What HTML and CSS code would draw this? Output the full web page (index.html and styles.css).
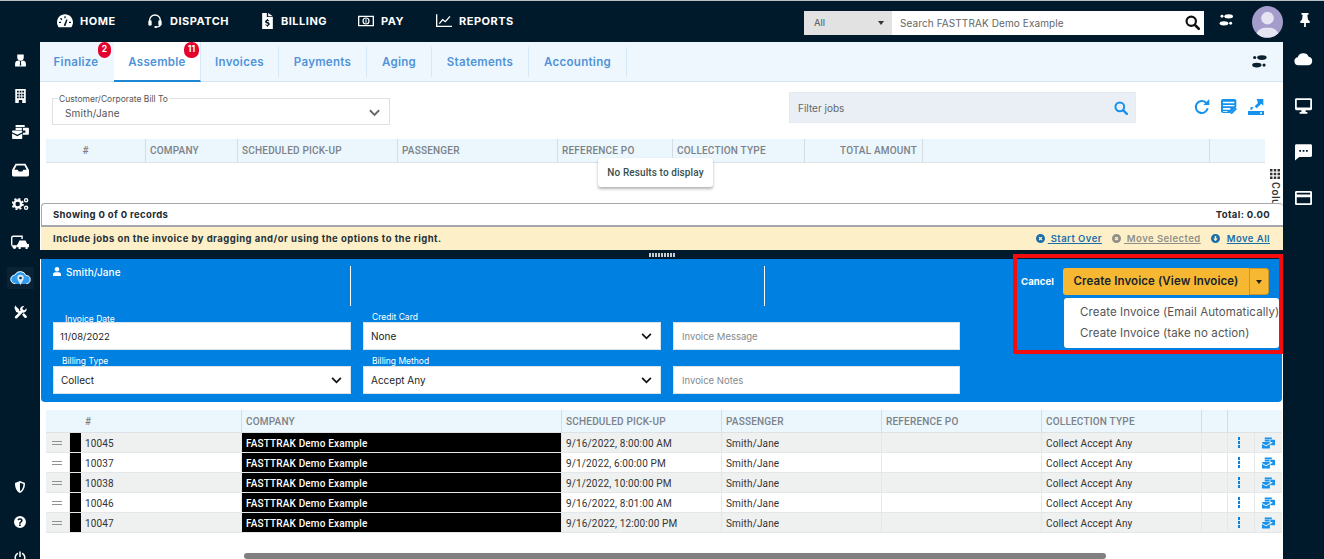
FILE: index.html
```html
<!DOCTYPE html>
<html lang="en">
<head>
<meta charset="utf-8">
<title>FASTTRAK Billing</title>
<link rel="stylesheet" href="styles.css">
</head>
<body>
<svg class="defs" width="0" height="0" aria-hidden="true">
  <symbol id="i-gauge" viewBox="0 0 24 24"><path fill="currentColor" fill-rule="evenodd" d="M12 2C5.400 2 0 7.400 0 14c0 2.700.9 5.200 2.400 7.200h19.200C23.100 19.200 24 16.700 24 14 24 7.400 18.600 2 12 2zM11 5h2v3h-2zM4.500 8.500l1.500-1.500 2.200 2.200-1.500 1.500zM3 13h3v2H3zM18 13h3v2h-3zM10.200 18.500l3.800-9 1.800.8-3 8.700a2 2 0 0 1-2.600-.5z"/></symbol>
  <symbol id="i-headset" viewBox="0 0 24 24"><path fill="none" stroke="currentColor" stroke-width="2" d="M4 13V11a8 8 0 0 1 16 0v2M20 17c0 3-3 4-6 4"/><rect x="2" y="11" width="5" height="8" rx="2" fill="currentColor"/><rect x="17" y="11" width="5" height="8" rx="2" fill="currentColor"/><rect x="11" y="19.500" width="4" height="3" rx="1.500" fill="currentColor"/></symbol>
  <symbol id="i-bill" viewBox="0 0 16 24"><path fill="currentColor" fill-rule="evenodd" d="M0 0h7v6H16v18H0zM9 0l7 5H9zM7.200 9v1.300C5.500 10.600 4.500 11.600 4.500 13c0 1.600 1.300 2.200 2.900 2.700 1 .3 1.400.6 1.400 1 0 .5-.5.800-1.200.800-.7 0-1.500-.3-2.100-.8l-.9 1.300c.7.600 1.600 1 2.600 1.100V20.500h1.500v-1.400c1.600-.3 2.600-1.300 2.600-2.700 0-1.700-1.300-2.300-2.900-2.800-1-.3-1.400-.5-1.400-.9s.4-.7 1.100-.7c.6 0 1.200.2 1.700.6l.9-1.200c-.6-.5-1.300-.8-2-.9V9z"/></symbol>
  <symbol id="i-money" viewBox="0 0 24 18"><path fill="none" stroke="currentColor" stroke-width="2" d="M1 2h22v14H1z"/><circle cx="12" cy="9" r="4.500" fill="none" stroke="currentColor" stroke-width="1.800"/><path stroke="currentColor" stroke-width="1.600" d="M12 6.500v5"/></symbol>
  <symbol id="i-chart" viewBox="0 0 24 20"><path fill="none" stroke="currentColor" stroke-width="2" d="M1 0v18h23M5 14l5-6 4 3 7-8"/></symbol>
  <symbol id="i-steps" viewBox="0 0 24 18"><ellipse cx="16" cy="3.500" rx="6.500" ry="3.300"/><circle cx="6" cy="3.500" r="2.200"/><ellipse cx="9" cy="14" rx="6.500" ry="3.300"/><circle cx="19" cy="14" r="2.200"/></symbol>
  <symbol id="i-pin" viewBox="0 0 24 24"><path fill="currentColor" d="M6 0h12v3h-2l1 8 3 3v3h-6.500v7h-3v-7H4v-3l3-3 1-8H6z"/></symbol>
  <symbol id="i-search" viewBox="0 0 24 24"><circle cx="10" cy="10" r="7.500" fill="none" stroke="currentColor" stroke-width="3.500"/><path stroke="currentColor" stroke-width="4" stroke-linecap="round" d="M16 16l6 6"/></symbol>
  <symbol id="i-user-tie" viewBox="0 0 24 24"><path fill="currentColor" d="M6 2h12v5a6 6 0 0 1-12 0z"/><path fill="currentColor" fill-rule="evenodd" d="M2 24v-5c0-4 3-6 6-6h8c3 0 6 2 6 6v5zM10.500 14l.8 2-.8 6h3l-.8-6 .8-2z"/></symbol>
  <symbol id="i-building" viewBox="0 0 20 24"><path fill="currentColor" fill-rule="evenodd" d="M1 0h18v24h-6v-5H7v5H1zM4 3v3h3V3zM8.500 3v3h3V3zM13 3v3h3V3zM4 8v3h3V8zM8.500 8v3h3V8zM13 8v3h3V8zM4 13v3h3v-3zM8.500 13v3h3v-3zM13 13v3h3v-3z"/></symbol>
  <symbol id="i-stack" viewBox="0 0 24 20"><path fill="currentColor" d="M5 0h13v3H5zM5 4h9v3H5zM15.500 4H23c.6 0 1 .4 1 1v8c0 .6-.4 1-1 1h-7.500v-3H19V8h-3.500z"/><path fill="currentColor" d="M1 8h12.500c.6 0 1 .4 1 1v1.200L7.500 14 0 10.200V9c0-.6.400-1 1-1zM0 12l7.500 4 7-4v7c0 .6-.4 1-1 1H1c-.6 0-1-.4-1-1z"/></symbol>
  <symbol id="i-inbox" viewBox="0 0 24 18"><path fill="currentColor" fill-rule="evenodd" d="M5 0h14l5 9v7c0 1.100-.9 2-2 2H2c-1.100 0-2-.9-2-2V9zM6.500 2.500L3.300 8.500H8l1.500 2.500h5L16 8.500h4.700l-3.200-6z"/></symbol>
  <symbol id="i-gears" viewBox="0 0 24 20"><circle cx="8" cy="10" r="5" fill="none" stroke="currentColor" stroke-width="3.500"/><circle cx="8" cy="10" r="7.500" fill="none" stroke="currentColor" stroke-width="2.500" stroke-dasharray="3 2.900"/><circle cx="20" cy="4.500" r="2.200" fill="none" stroke="currentColor" stroke-width="2"/><circle cx="20" cy="15.500" r="2.200" fill="none" stroke="currentColor" stroke-width="2"/></symbol>
  <symbol id="i-fleet" viewBox="0 0 26 20"><path fill="none" stroke="currentColor" stroke-width="2" d="M1 14V3c0-1 1-2 2-2h13v4M1 15h9"/><circle cx="5" cy="17" r="2.500" fill="currentColor"/><path fill="currentColor" fill-rule="evenodd" d="M12 7h9l2.500 5H26v5h-2v2.500h-3V17h-7v2.500h-3V17H9v-5h1z"/></symbol>
  <symbol id="i-cloud-pin" viewBox="0 0 32 24"><path fill="#2f9cf0" d="M8 21a7 7 0 0 1-1-14A9.500 9.500 0 0 1 24.500 8 6.500 6.500 0 0 1 25 21z"/><path fill="none" stroke="#fff" stroke-width="1.400" d="M8 20.500a6.500 6.500 0 0 1-.5-13 9 9 0 0 1 16.700.8A6 6 0 0 1 25 20.500"/><path fill="#dbe6ee" d="M16 7a5 5 0 0 1 5 5c0 3-3.500 6-5 11-1.500-5-5-8-5-11a5 5 0 0 1 5-5z"/><circle cx="16" cy="12" r="2" fill="#0e2a3e"/></symbol>
  <symbol id="i-tools" viewBox="0 0 24 24"><path fill="currentColor" d="M2 0l7 7 1 3 4 4-3 3-4-4-3-1-3-7zM17 1a6 6 0 0 1 2 .3l-3.500 3.500 1 3 3 1L23 5.300A6 6 0 0 1 16 13L6 23a2.500 2.500 0 0 1-4.500-1.500c0-.7.300-1.300.8-1.800L12 10a6 6 0 0 1 5-9zM15 17l3-3 5 5c1 1 1 2.500 0 3.500s-2.500 1-3.500 0z"/></symbol>
  <symbol id="i-shield" viewBox="0 0 20 24"><path fill="currentColor" fill-rule="evenodd" d="M10 0l10 4c0 8-2 16-10 20C2 20 0 12 0 4zM10 3.500v17c5-3 6.500-8.500 7-14.500z"/></symbol>
  <symbol id="i-help" viewBox="0 0 24 24"><path fill="currentColor" fill-rule="evenodd" d="M12 0a12 12 0 1 0 0 24 12 12 0 0 0 0-24zM10.300 15.500v-1.200c0-3 3.700-3.200 3.700-5.300 0-1-.9-1.600-2.100-1.600-1.100 0-2 .5-2.800 1.500L7 7.300C8.200 5.500 9.900 4.600 12.200 4.600c2.900 0 5.100 1.600 5.100 4.300 0 3.300-3.800 3.600-3.800 5.600v1zM10 17h3.600v3.200H10z"/></symbol>
  <symbol id="i-power" viewBox="0 0 24 24"><path fill="none" stroke="currentColor" stroke-width="3" d="M8 4.500a9.500 9.500 0 1 0 8 0M12 1v11"/></symbol>
  <symbol id="i-cloud" viewBox="0 0 24 16"><path fill="currentColor" d="M5.500 16a5.200 5.200 0 0 1-.8-10.300A7.500 7.500 0 0 1 18.600 5a5.600 5.600 0 0 1-.4 11z"/></symbol>
  <symbol id="i-desktop" viewBox="0 0 24 22"><path fill="currentColor" fill-rule="evenodd" d="M2 0h20c1.100 0 2 .9 2 2v13c0 1.100-.9 2-2 2h-7v2.500h2.500V22h-11v-2.500H9V17H2c-1.100 0-2-.9-2-2V2C0 .9.900 0 2 0zM2.500 2.500V13h19V2.500z"/></symbol>
  <symbol id="i-chat" viewBox="0 0 24 24"><path fill="currentColor" fill-rule="evenodd" d="M2 1h20c1.100 0 2 .9 2 2v14c0 1.100-.9 2-2 2H6l-6 5V3c0-1.100.9-2 2-2zM6 9v2.500h2.500V9zM10.800 9v2.500h2.500V9zM15.500 9v2.500H18V9z"/></symbol>
  <symbol id="i-card" viewBox="0 0 24 20"><path fill="currentColor" fill-rule="evenodd" d="M2 0h20c1.100 0 2 .9 2 2v16c0 1.100-.9 2-2 2H2c-1.100 0-2-.9-2-2V2C0 .9.900 0 2 0zM2.500 2.500V5h19V2.500zM2.500 9v8.500h19V9z"/></symbol>
  <symbol id="i-refresh" viewBox="0 0 24 24"><path fill="none" stroke="currentColor" stroke-width="3" d="M20.500 14a9 9 0 1 1-2.500-8.500"/><path fill="currentColor" d="M14 9h9V0z"/></symbol>
  <symbol id="i-note" viewBox="0 0 24 24"><path fill="currentColor" fill-rule="evenodd" d="M3 0h17c1.700 0 3 1.300 3 3v9l-9 9H3c-1.700 0-3-1.300-3-3V3C0 1.300 1.300 0 3 0zM3 4v2.500h17V4zM3 9v2h17V9zM3 13.500V16h11v-2.500zM3 18v1h7v-1z"/><path fill="currentColor" d="M22 13l2 2-7 7-3 1 1-3z"/></symbol>
  <symbol id="i-export" viewBox="0 0 24 24"><path fill="currentColor" fill-rule="evenodd" d="M0 18h24v6H0zM18 20v2h3v-2z"/><path fill="currentColor" d="M13 0h10v10l-3-3-7 7-3-3 5-5zM4 12h4l-2 4H3.500z"/></symbol>
  <symbol id="i-x-circle" viewBox="0 0 24 24"><path fill="currentColor" fill-rule="evenodd" d="M12 0a12 12 0 1 0 0 24 12 12 0 0 0 0-24zM7 9.500L9.500 7l2.500 2.500L14.500 7 17 9.500 14.500 12l2.500 2.500-2.500 2.500-2.500-2.500L9.500 17 7 14.500 9.500 12z"/></symbol>
  <symbol id="i-down-circle" viewBox="0 0 24 24"><path fill="currentColor" fill-rule="evenodd" d="M12 0a12 12 0 1 0 0 24 12 12 0 0 0 0-24zM10 5h4v7h4l-6 7-6-7h4z"/></symbol>
  <symbol id="i-chev" viewBox="0 0 12 8"><path fill="none" stroke="currentColor" stroke-width="2" d="M1 1l5 5 5-5"/></symbol>
  <symbol id="i-person" viewBox="0 0 16 18"><circle cx="8" cy="4.500" r="4.500" fill="currentColor"/><path fill="currentColor" d="M0 18v-3c0-3 2-4.500 5-4.500h6c3 0 5 1.500 5 4.500v3z"/></symbol>
  <symbol id="i-apps" viewBox="0 0 12 12"><path fill="currentColor" d="M0 0h3v3H0zM4.500 0h3v3h-3zM9 0h3v3H9zM0 4.500h3v3H0zM4.500 4.500h3v3h-3zM9 4.500h3v3H9zM0 9h3v3H0zM4.500 9h3v3h-3zM9 9h3v3H9z"/></symbol>
</svg>

<div class="app">
  <header class="topbar">
    <nav class="topnav">
      <a class="topnav-item"><svg class="ic-nav"><use href="#i-gauge"/></svg>HOME</a>
      <a class="topnav-item"><svg class="ic-nav"><use href="#i-headset"/></svg>DISPATCH</a>
      <a class="topnav-item"><svg class="ic-nav ic-nav-bill"><use href="#i-bill"/></svg>BILLING</a>
      <a class="topnav-item"><svg class="ic-nav"><use href="#i-money"/></svg>PAY</a>
      <a class="topnav-item"><svg class="ic-nav"><use href="#i-chart"/></svg>REPORTS</a>
    </nav>
    <div class="search">
      <div class="search-scope"><span>All</span><i class="caret"></i></div>
      <div class="search-input"><span>Search FASTTRAK Demo Example</span><svg class="ic-search"><use href="#i-search"/></svg></div>
    </div>
    <svg class="ic-steps-top"><use href="#i-steps"/></svg>
    <div class="avatar"><svg viewBox="0 0 32 32"><circle cx="16" cy="12" r="6.500"/><path d="M4 32c0-7 5-9 8-10h8c3 1 8 3 8 10z"/></svg></div>
    <svg class="ic-pin"><use href="#i-pin"/></svg>
  </header>

  <div class="body">
    <aside class="leftbar">
      <div class="side-item"><svg class="ic-side"><use href="#i-user-tie"/></svg></div>
      <div class="side-item"><svg class="ic-side"><use href="#i-building"/></svg></div>
      <div class="side-item"><svg class="ic-side ic-wide"><use href="#i-stack"/></svg></div>
      <div class="side-item side-nudge"><svg class="ic-side ic-wide"><use href="#i-inbox"/></svg></div>
      <div class="side-item"><svg class="ic-side ic-wide"><use href="#i-gears"/></svg></div>
      <div class="side-item side-nudge"><svg class="ic-side ic-fleet"><use href="#i-fleet"/></svg></div>
      <div class="side-item side-nudge"><svg class="ic-active"><use href="#i-cloud-pin"/></svg></div>
      <div class="side-item"><svg class="ic-side"><use href="#i-tools"/></svg></div>
      <div class="side-item side-lower"><svg class="ic-side ic-small"><use href="#i-shield"/></svg></div>
      <div class="side-item"><svg class="ic-side ic-small"><use href="#i-help"/></svg></div>
      <div class="side-item"><svg class="ic-side ic-small"><use href="#i-power"/></svg></div>
    </aside>

    <main class="main">
      <div class="tabs">
        <a class="tab tab-finalize">Finalize<b class="badge badge-one">2</b></a>
        <a class="tab tab-assemble tab-active">Assemble<b class="badge badge-two">11</b></a>
        <a class="tab tab-invoices">Invoices</a>
        <a class="tab tab-payments">Payments</a>
        <a class="tab tab-aging">Aging</a>
        <a class="tab tab-statements">Statements</a>
        <a class="tab tab-accounting">Accounting</a>
        <svg class="ic-steps-tab"><use href="#i-steps"/></svg>
      </div>

      <div class="filters">
        <div class="billto">
          <span class="billto-label">Customer/Corporate Bill To</span>
          <span>Smith/Jane</span>
          <svg class="ic-chev-grey"><use href="#i-chev"/></svg>
        </div>
        <div class="filter-jobs"><span>Filter jobs</span><svg class="ic-filter"><use href="#i-search"/></svg></div>
        <div class="tools">
          <svg class="ic-tool"><use href="#i-refresh"/></svg>
          <svg class="ic-tool"><use href="#i-note"/></svg>
          <svg class="ic-tool"><use href="#i-export"/></svg>
        </div>
      </div>

      <div class="upper-head">
        <div class="hc hc-num">#</div>
        <div class="hc">COMPANY</div>
        <div class="hc">SCHEDULED PICK-UP</div>
        <div class="hc">PASSENGER</div>
        <div class="hc">REFERENCE PO</div>
        <div class="hc">COLLECTION TYPE</div>
        <div class="hc hc-right">TOTAL AMOUNT</div>
        <div class="hc"></div>
        <div class="hc hc-last"></div>
      </div>
      <div class="upper-empty">
        <div class="no-results">No Results to display</div>
        <div class="columns-tab"><svg class="ic-apps"><use href="#i-apps"/></svg><span>Columns</span></div>
      </div>

      <div class="records"><span>Showing 0 of 0 records</span><span>Total: 0.00</span></div>
      <div class="hint">
        <span>Include jobs on the invoice by dragging and/or using the options to the right.</span>
        <div class="hint-actions">
          <a class="hint-link"><svg class="ic-hint"><use href="#i-x-circle"/></svg><u>&nbsp;Start Over</u></a>
          <a class="hint-link hint-off"><svg class="ic-hint"><use href="#i-x-circle"/></svg><u>&nbsp;Move Selected</u></a>
          <a class="hint-link hint-all"><svg class="ic-hint"><use href="#i-down-circle"/></svg><u>Move All</u></a>
        </div>
      </div>
      <div class="divider"><i class="handle"></i></div>

      <section class="panel">
        <div class="panel-left">
          <div class="panel-info">
            <div class="info-col info-name"><svg class="ic-person"><use href="#i-person"/></svg>Smith/Jane</div>
            <div class="info-col info-mid"></div>
          </div>
          <div class="fields">
            <div class="field"><label class="field-label label-date">Invoice Date</label><div class="control control-date">11/08/2022</div></div>
            <div class="field"><label class="field-label">Credit Card</label><div class="control">None<svg class="ic-chev"><use href="#i-chev"/></svg></div></div>
            <div class="field"><label class="field-label"></label><div class="control control-ph">Invoice Message</div></div>
            <div class="field"><label class="field-label label-type">Billing Type</label><div class="control">Collect<svg class="ic-chev"><use href="#i-chev"/></svg></div></div>
            <div class="field"><label class="field-label">Billing Method</label><div class="control">Accept Any<svg class="ic-chev"><use href="#i-chev"/></svg></div></div>
            <div class="field"><label class="field-label"></label><div class="control control-ph">Invoice Notes</div></div>
          </div>
        </div>
        <div class="panel-actions">
          <a class="cancel">Cancel</a>
          <button class="create">Create Invoice (View Invoice)</button>
          <button class="create-caret"><i class="caret caret-dark"></i></button>
        </div>
        <div class="menu">
          <div class="menu-item">Create Invoice (Email Automatically)</div>
          <div class="menu-item">Create Invoice (take no action)</div>
        </div>
        <div class="highlight"></div>
      </section>

      <div class="lower">
        <div class="lower-row lower-head">
          <div class="lc lc-span">#</div>
          <div class="lc">COMPANY</div>
          <div class="lc">SCHEDULED PICK-UP</div>
          <div class="lc">PASSENGER</div>
          <div class="lc">REFERENCE PO</div>
          <div class="lc">COLLECTION TYPE</div>
          <div class="lc"></div>
          <div class="lc lc-end"></div>
        </div>
        <div class="lower-row job"><div class="lc grip"><i></i></div><div class="lc swatch"></div><div class="lc">10045</div><div class="lc co">FASTTRAK Demo Example</div><div class="lc">9/16/2022, 8:00:00 AM</div><div class="lc">Smith/Jane</div><div class="lc"></div><div class="lc">Collect Accept Any</div><div class="lc"></div><div class="lc dots"><i></i></div><div class="lc act"><svg class="ic-row"><use href="#i-stack"/></svg></div></div>
        <div class="lower-row job"><div class="lc grip"><i></i></div><div class="lc swatch"></div><div class="lc">10037</div><div class="lc co">FASTTRAK Demo Example</div><div class="lc">9/1/2022, 6:00:00 PM</div><div class="lc">Smith/Jane</div><div class="lc"></div><div class="lc">Collect Accept Any</div><div class="lc"></div><div class="lc dots"><i></i></div><div class="lc act"><svg class="ic-row"><use href="#i-stack"/></svg></div></div>
        <div class="lower-row job"><div class="lc grip"><i></i></div><div class="lc swatch"></div><div class="lc">10038</div><div class="lc co">FASTTRAK Demo Example</div><div class="lc">9/1/2022, 10:00:00 PM</div><div class="lc">Smith/Jane</div><div class="lc"></div><div class="lc">Collect Accept Any</div><div class="lc"></div><div class="lc dots"><i></i></div><div class="lc act"><svg class="ic-row"><use href="#i-stack"/></svg></div></div>
        <div class="lower-row job"><div class="lc grip"><i></i></div><div class="lc swatch"></div><div class="lc">10046</div><div class="lc co">FASTTRAK Demo Example</div><div class="lc">9/16/2022, 8:01:00 AM</div><div class="lc">Smith/Jane</div><div class="lc"></div><div class="lc">Collect Accept Any</div><div class="lc"></div><div class="lc dots"><i></i></div><div class="lc act"><svg class="ic-row"><use href="#i-stack"/></svg></div></div>
        <div class="lower-row job"><div class="lc grip"><i></i></div><div class="lc swatch"></div><div class="lc">10047</div><div class="lc co">FASTTRAK Demo Example</div><div class="lc">9/16/2022, 12:00:00 PM</div><div class="lc">Smith/Jane</div><div class="lc"></div><div class="lc">Collect Accept Any</div><div class="lc"></div><div class="lc dots"><i></i></div><div class="lc act"><svg class="ic-row"><use href="#i-stack"/></svg></div></div>
      </div>
      <div class="hscroll"></div>
    </main>

    <aside class="rightbar">
      <svg class="ic-right ic-right-cloud"><use href="#i-cloud"/></svg>
      <svg class="ic-right"><use href="#i-desktop"/></svg>
      <svg class="ic-right"><use href="#i-chat"/></svg>
      <svg class="ic-right"><use href="#i-card"/></svg>
    </aside>
  </div>
</div>
</body>
</html>
```

FILE: styles.css
```css
* { box-sizing: border-box; }
html, body { margin: 0; padding: 0; height: 100%; overflow: hidden; }
body { font-family: "Inter", "Liberation Sans", sans-serif; color: #222; background: #011a2b; }
.defs { position: absolute; }
.app { height: 559px; display: flex; flex-direction: column; overflow: hidden; border-top: 1px solid #b9c0c4; }

/* top bar */
.topbar { height: 41px; flex: none; background: #011a2b; display: flex; align-items: center; color: #fff; }
.topnav { display: grid; grid-template-columns: 90px 115px 96px 78px 90px; margin-left: 57px; padding-bottom: 2px; }
.topnav-item { display: flex; align-items: center; gap: 7px; font-size: 11px; font-weight: 700; letter-spacing: .5px; white-space: nowrap; }
.ic-nav { width: 16px; height: 16px; flex: none; color: #fff; }
.ic-nav-bill { width: 11px; margin-right: 1px; }
.search { display: flex; height: 24px; margin-left: 278px; margin-top: 2px; }
.search-scope { width: 88px; background: #e2e2e2; display: flex; align-items: center; justify-content: space-between; padding: 0 8px 0 10px; font-size: 9.500px; color: #555; }
.caret { display: block; width: 0; height: 0; border-left: 3.500px solid transparent; border-right: 3.500px solid transparent; border-top: 4px solid #333; }
.caret-dark { border-top-color: #222; }
.search-input { width: 312px; background: #fff; display: flex; align-items: center; justify-content: space-between; padding: 0 4px 0 8px; font-size: 10px; color: #666; letter-spacing: .1px; }
.ic-search { width: 15px; height: 15px; color: #111; }
.ic-steps-top { width: 16px; height: 12px; fill: #fff; margin-left: 14px; margin-top: -3px; }
.avatar { width: 31px; height: 32px; border-radius: 50%; background: #a49cca; margin-left: 18px; overflow: hidden; }
.avatar svg { display: block; width: 100%; height: 100%; fill: #e6e4f2; }
.ic-pin { width: 14px; height: 16px; color: #fff; margin-left: 15px; margin-top: -3px; }

.body { flex: 1; display: flex; min-height: 0; }

/* left bar */
.leftbar { width: 40px; flex: none; display: flex; flex-direction: column; color: #fff; }
.side-item { height: 36px; flex: none; display: flex; align-items: center; justify-content: center; }
.side-nudge { padding-top: 4px; }
.side-lower { margin-top: 139px; }
.side-lower, .side-lower ~ .side-item { height: 35px; }
.ic-side { width: 13px; height: 14px; color: #fff; }
.ic-wide { width: 17px; height: 14px; }
.ic-fleet { width: 18px; height: 15px; }
.ic-active { width: 21px; height: 16px; background: #0a2233; box-shadow: 0 0 0 3px #0a2233; }
.ic-small { width: 12px; height: 12px; }

/* main */
.main { width: 1243px; flex: none; background: #fff; display: flex; flex-direction: column; min-height: 0; }
.tabs { height: 40px; flex: none; background: #eff7fe; border-bottom: 1px solid #d3e7f5; display: flex; align-items: stretch; }
.tab { position: relative; display: flex; align-items: center; justify-content: center; font-size: 11.500px; font-weight: 600; letter-spacing: .3px; color: #4f94d8; border-right: 1px solid #d6e8f6; margin: 5px 0 4px; }
.tab-finalize { width: 74px; border-right: none; padding-right: 2px; }
.tab-assemble { width: 87px; }
.tab-active { margin: 0 0 -1px; background: #fff; border-right: 1px solid #d6e8f6; border-bottom: 2px solid #1d87d4; padding-top: 2px; }
.tab-invoices { width: 78px; }
.tab-payments { width: 88px; }
.tab-aging { width: 65px; }
.tab-statements { width: 97px; }
.tab-accounting { width: 98px; }
.badge { position: absolute; top: -5px; width: 13px; height: 16px; border-radius: 7px; background: #e4032e; color: #fff; font-size: 8.500px; font-weight: 700; letter-spacing: 0; text-align: center; line-height: 14px; }
.tab-active .badge { top: 0; }
.badge-one { left: 58px; }
.badge-two { left: 70px; width: 15px; }
.ic-steps-tab { width: 18px; height: 13px; fill: #0d2231; margin-left: auto; margin-right: 15px; align-self: center; }

.filters { height: 57px; flex: none; display: flex; align-items: flex-start; }
.billto { position: relative; margin: 16px 0 0 12px; width: 338px; height: 27px; border: 1px solid #e0e0e0; display: flex; align-items: center; justify-content: space-between; padding: 3px 9px 0 12px; font-size: 10px; letter-spacing: .2px; color: #555; }
.billto-label { position: absolute; left: 5px; top: -4px; background: #fff; font-size: 8.500px; letter-spacing: 0; line-height: 9px; padding: 0 1px; color: #555; white-space: nowrap; }
.ic-chev-grey { width: 11px; height: 8px; color: #666; }
.filter-jobs { margin: 10px 0 0 399px; width: 347px; height: 31px; background: #eaeff6; border: 1px solid #e6ebf2; display: flex; align-items: center; justify-content: space-between; padding: 0 7px 0 8px; font-size: 10px; color: #666; }
.ic-filter { width: 14px; height: 14px; color: #1592ee; }
.tools { display: flex; gap: 11px; margin: 17px 0 0 58px; }
.ic-tool { width: 16px; height: 16px; color: #1592ee; flex: none; }

.upper-head { height: 24px; flex: none; margin: 0 18px 0 6px; background: #ebf6fd; border-bottom: 1px solid #dde2e5; display: grid; grid-template-columns: 100px 92px 160px 160px 115px 132px 118px 287px 55px; font-family: "Roboto", "Liberation Sans", sans-serif; font-size: 10px; font-weight: 500; letter-spacing: .2px; color: #7c8288; }
.hc { display: flex; align-items: center; padding-left: 4px; border-right: 1px solid #d5dde2; }
.hc-num { justify-content: center; padding: 0 20px 0 0; }
.hc-right { justify-content: flex-end; padding: 0 5px 0 0; }
.hc-last { border-right: none; }
.upper-empty { position: relative; height: 40px; flex: none; }
.no-results { position: absolute; left: 558px; top: -5px; width: 115px; height: 29px; background: #fff; border-radius: 3px; box-shadow: 0 2px 3px rgba(0,0,0,.3); font-family: "Roboto", "Liberation Sans", sans-serif; font-size: 10px; font-weight: 500; letter-spacing: .1px; color: #37504f; display: flex; align-items: center; justify-content: center; }
.columns-tab { position: absolute; left: 1229px; top: 6px; width: 12px; height: 34px; overflow: hidden; display: flex; flex-direction: column; align-items: center; gap: 3px; }
.ic-apps { width: 10px; height: 10px; color: #333; flex: none; }
.columns-tab span { writing-mode: vertical-rl; font-family: "Roboto", sans-serif; font-size: 10.500px; letter-spacing: .6px; font-weight: 500; color: #333; }

.records { height: 24px; flex: none; margin-left: 1px; background: #fff; border: 1px solid #a3a8aa; border-width: 1px 0 2px 1px; border-radius: 4px 4px 0 0; display: flex; align-items: center; justify-content: space-between; padding: 0 13px 0 11px; font-size: 9.500px; font-weight: 700; color: #1c2b33; letter-spacing: .35px; }
.hint { height: 23px; flex: none; margin-left: 1px; background: #fdf0c9; display: flex; align-items: center; justify-content: space-between; padding: 0 13px 0 12px; font-size: 9.500px; font-weight: 700; color: #25323a; letter-spacing: .46px; }
.hint-actions { display: flex; gap: 10px; }
.hint-link { display: flex; align-items: center; gap: 3px; color: #1c6da8; font-size: 9.500px; font-weight: 600; letter-spacing: .45px; }
.hint-off { color: #8f8f88; }
.hint-all u { margin-left: 4px; }
.ic-hint { width: 9px; height: 9px; }
.divider { height: 9px; flex: none; background: #011a2b; display: flex; align-items: center; justify-content: center; }
.handle { width: 26px; height: 4px; background: repeating-linear-gradient(90deg, #c8ced2 0 2px, transparent 2px 3px); }

/* blue panel */
.panel { position: relative; height: 143px; flex: none; margin: 0 1px; background: #0080e1; border-radius: 0 0 4px 4px; padding: 7px 13px 0 12px; display: flex; justify-content: space-between; color: #fff; }
.panel-left { width: 907px; }
.panel-info { display: flex; height: 40px; margin-bottom: 7px; }
.info-col { height: 40px; border-right: 1px solid #fff; font-size: 10px; letter-spacing: .1px; font-weight: 500; display: flex; align-items: flex-start; gap: 5px; }
.info-name { width: 298px; }
.info-mid { width: 414px; }
.ic-person { width: 8px; height: 9px; margin-top: 1px; }
.fields { display: grid; grid-template-columns: 298px 298px 287px; column-gap: 12px; row-gap: 7px; }
.field-label { display: block; height: 9px; font-size: 8.500px; line-height: 9px; padding-left: 9px; white-space: nowrap; }
.label-date { padding-left: 12px; line-height: 12px; }
.label-type { padding-left: 9px; }
.control { height: 28px; background: #fff; border: 1px solid #d9e3ea; display: flex; align-items: center; justify-content: space-between; padding: 0 8px 0 7px; font-size: 10px; color: #1c1c1c; }
.control-date { padding-left: 6px; font-size: 9.500px; }
.control-ph { color: #85898c; padding-left: 8px; font-size: 9.500px; }
.ic-chev { width: 11px; height: 7px; color: #111; }
.panel-actions { display: flex; align-items: flex-start; padding-top: 2px; }
.cancel { font-size: 9.500px; font-weight: 700; letter-spacing: .1px; margin: 8px 9px 0 0; }
.create { width: 186px; height: 27px; padding: 0 0 1px; background: #f6b833; border: none; border-radius: 3px 0 0 3px; font-family: inherit; font-size: 11.500px; font-weight: 600; letter-spacing: .1px; color: #17242b; white-space: nowrap; }
.create-caret { width: 20px; height: 27px; padding: 0; margin-left: 0; background: #f6b833; border: 1px solid #c9962e; border-radius: 0 3px 3px 0; display: flex; align-items: center; justify-content: center; }
.menu { position: absolute; left: 1023px; top: 39px; width: 215px; height: 50px; overflow: hidden; background: #fff; border-radius: 3px; padding: 4px 0 0 16px; font-size: 11.500px; letter-spacing: .1px; color: #555; white-space: nowrap; }
.menu-item { height: 21px; line-height: 21px; }
.highlight { position: absolute; left: 972px; top: -5px; width: 270px; height: 100px; border: 4px solid #f50d0d; pointer-events: none; }

/* lower table */
.lower { margin: 8px 1px 0 6px; flex: none; font-family: "Roboto", "Liberation Sans", sans-serif; font-size: 10px; letter-spacing: .15px; color: #333; }
.lower-row { display: grid; grid-template-columns: 24px 11px 161px 320px 160px 160px 160px 160px 26px 27px 27px; height: 20px; border-bottom: 1px solid #e4e7e7; }
.lower-head { height: 23px; background: #ebf6fd; border-bottom: 1px solid #dde2e5; grid-template-columns: 196px 320px 160px 160px 160px 160px 26px 54px; color: #7c8288; font-weight: 500; letter-spacing: .2px; }
.lc { display: flex; align-items: center; padding-left: 4px; border-right: 1px solid #e4e7e7; overflow: hidden; white-space: nowrap; }
.job .lc { padding-top: 1px; }
.lower-head .lc { border-right-color: #d5dde2; }
.lc-span { padding-left: 39px; }
.lc-end { border-right: none; }
.job:nth-child(even) { background: #eff0f0; }
.job:nth-child(odd) { background: #fff; }
.grip { justify-content: center; }
.job .grip { padding: 0; }
.grip i { display: block; width: 10px; height: 4px; margin-left: -2px; border-top: 1px solid #8f9393; border-bottom: 1px solid #8f9393; }
.swatch { background: #000; border: none; }
.job .swatch { padding: 0; }
.co { background: #000; color: #fff; font-weight: 500; }
.dots { justify-content: center; }
.job .dots { padding: 0 4px 0 0; }
.dots i { display: block; width: 2.500px; height: 2.500px; background: #0d82e0; box-shadow: 0 4px 0 #0d82e0, 0 -4px 0 #0d82e0; }
.act { justify-content: center; border-right: none; }
.job .act { padding: 0; }
.ic-row { width: 13px; height: 12px; color: #1592ee; }
.hscroll { flex: none; width: 862px; height: 6px; margin: 20px 0 0 204px; border-radius: 3px; background: #808080; }

/* right bar */
.rightbar { flex: 1; display: flex; flex-direction: column; align-items: center; gap: 10px; color: #fff; }
.ic-right { width: 17px; height: 36px; color: #fff; flex: none; }
.ic-right-cloud { width: 19px; margin-top: -1px; margin-bottom: 1px; }
```
